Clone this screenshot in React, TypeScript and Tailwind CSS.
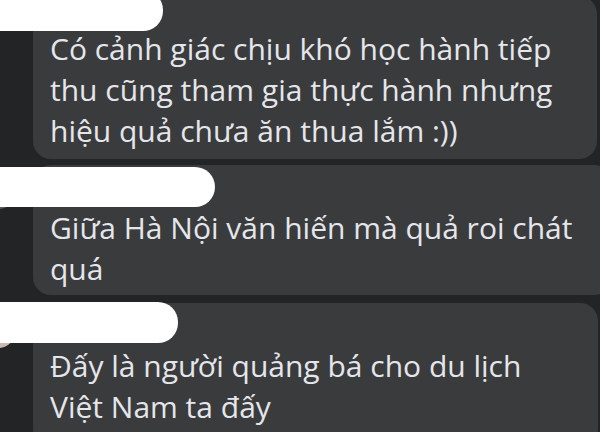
import React from 'react';

type Comment = {
  lines: string[];
  blobWidth: number;
  avatar: string;
  bubbleClass: string;
  blobClass: string;
  avatarClass: string;
};

const COMMENTS: Comment[] = [
  {
    lines: [
      'Có cảnh giác chịu khó học hành tiếp',
      'thu cũng tham gia thực hành nhưng',
      'hiệu quả chưa ăn thua lắm :))',
    ],
    blobWidth: 163,
    avatar: '#c9c1b6',
    bubbleClass: 'mt-[-4px] mr-[3px] pt-[32px] pb-[8px] rounded-[18px]',
    blobClass: 'top-[-10px] h-[41px]',
    avatarClass: 'top-[-8px]',
  },
  {
    lines: ['Giữa Hà Nội văn hiến mà quả roi chát', 'quá'],
    blobWidth: 215,
    avatar: '#5a5c60',
    bubbleClass: 'mr-[-12px] pt-[42px] pb-[6px] rounded-[18px]',
    blobClass: 'top-[2px] h-[40px]',
    avatarClass: 'top-[8px]',
  },
  {
    lines: ['Đấy là người quảng bá cho du lịch', 'Việt Nam ta đấy'],
    blobWidth: 178,
    avatar: '#cbb9b4',
    bubbleClass: 'mt-[2px] mr-[2px] pt-[42px] pb-[20px] rounded-[18px]',
    blobClass: 'top-[1px] h-[41px]',
    avatarClass: 'top-[11px]',
  },
];

const CommentRow = ({ c }: { c: Comment }) => (
  <div className="relative pl-[33px]">
    {/* avatar, mostly hidden by the white blob */}
    <div
      className={`absolute left-[-20px] w-[36px] h-[36px] rounded-full ${c.avatarClass}`}
      style={{ backgroundColor: c.avatar }}
    />
    <div className={`bg-[#3a3b3c] pl-[17px] pr-4 ${c.bubbleClass}`}>
      {c.lines.map((l, i) => (
        <div key={i} className="text-[30px] leading-[41px] text-[#e4e6eb] whitespace-nowrap">
          {l}
        </div>
      ))}
    </div>
    {/* redacted name */}
    <div
      className={`absolute left-[-20px] bg-white rounded-r-[20px] rounded-l-[4px] ${c.blobClass}`}
      style={{ width: c.blobWidth + 20 }}
    />
  </div>
);

export default function App() {
  return (
    <div
      className="w-[600px] h-[432px] overflow-hidden bg-[#232425] flex flex-col gap-[6px]"
      style={{ fontFamily: '"Open Sans", "Noto Sans", sans-serif' }}
    >
      {COMMENTS.map((c, i) => (
        <CommentRow key={i} c={c} />
      ))}
    </div>
  );
}
